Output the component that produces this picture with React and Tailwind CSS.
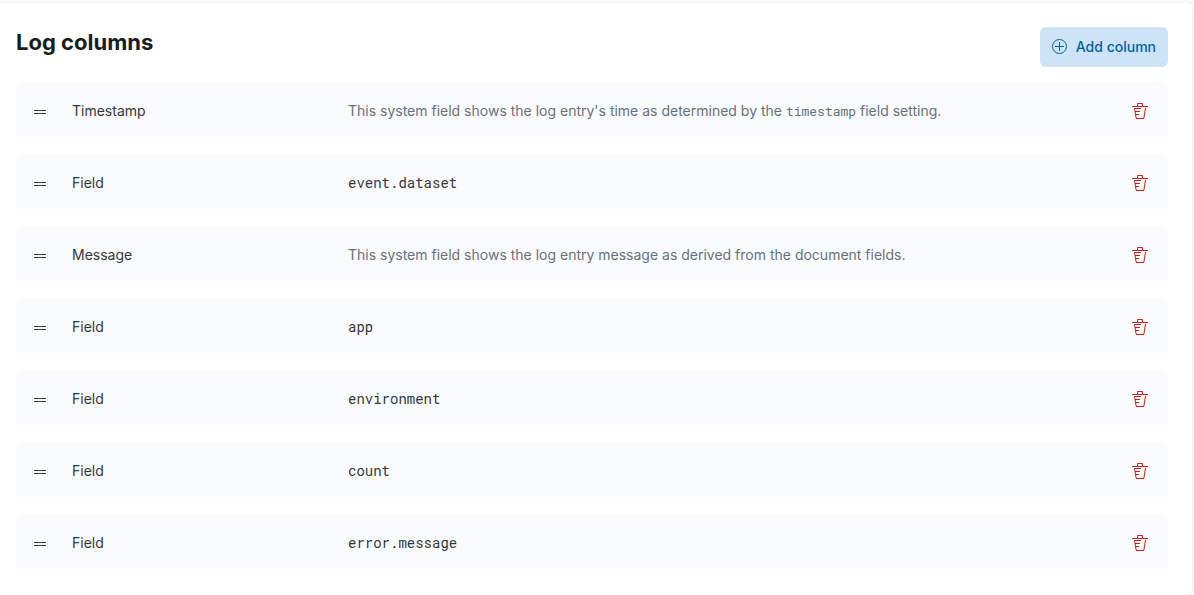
const COLUMNS = [
  {
    id: 'timestamp',
    type: 'Timestamp',
    description: (
      <>
        This system field shows the log entry's time as determined by the{' '}
        <code className="font-['Roboto_Mono','DejaVu_Sans_Mono',monospace] text-[13px]">timestamp</code> field setting.
      </>
    ),
  },
  { id: 'dataset', type: 'Field', field: 'event.dataset' },
  {
    id: 'message',
    type: 'Message',
    description: 'This system field shows the log entry message as derived from the document fields.',
  },
  { id: 'app', type: 'Field', field: 'app' },
  { id: 'environment', type: 'Field', field: 'environment' },
  { id: 'count', type: 'Field', field: 'count' },
  { id: 'error', type: 'Field', field: 'error.message' },
];

function GrabIcon() {
  return (
    <svg className="size-4" viewBox="0 0 16 16" fill="currentColor" aria-hidden="true">
      <rect x="2" y="7" width="12" height="1" />
      <rect x="2" y="10" width="12" height="1" />
    </svg>
  );
}

function PlusInCircleIcon() {
  return (
    <svg className="size-4" viewBox="0 0 16 16" fill="none" stroke="currentColor" aria-hidden="true">
      <circle cx="7.5" cy="7.5" r="7" />
      <path d="M7.5 3v9M3 7.5h9" />
    </svg>
  );
}

function TrashIcon() {
  return (
    <svg className="size-4" viewBox="0 0 16 16" fill="currentColor" aria-hidden="true">
      <path d="M11 3h5v1H0V3h5V1a1 1 0 0 1 1-1h4a1 1 0 0 1 1 1v2Zm-7.056 8H7v1H4.1l.392 2.519c.042.269.254.458.493.458h6.03c.239 0 .451-.189.493-.458l1.498-9.576H14l-1.504 9.73c-.116.747-.74 1.304-1.458 1.304h-6.03c-.718 0-1.342-.557-1.458-1.304L2 4.943 9 4.95v1H3.157L3.476 8H8v1H3.632l.312 2ZM6 3h4V1H6v2Z" />
    </svg>
  );
}

function ColumnRow({ column }) {
  return (
    <li className="flex h-14 items-center rounded-md bg-[#fafbfd] px-4">
      <button type="button" aria-label={`Reorder ${column.type} column`} className="cursor-grab text-[#343741]">
        <GrabIcon />
      </button>
      <div className="ml-6 w-[276px] shrink-0 text-[#343741]">{column.type}</div>
      {column.field ? (
        <code className="min-w-0 flex-1 font-['Roboto_Mono','DejaVu_Sans_Mono',monospace] text-sm text-[#343741]">
          {column.field}
        </code>
      ) : (
        <p className="min-w-0 flex-1 text-[#69707d]">{column.description}</p>
      )}
      <button type="button" aria-label={`Remove ${column.type} column`} className="mx-1 text-[#bd271e]">
        <TrashIcon />
      </button>
    </li>
  );
}

export default function App() {
  return (
    <div className="overflow-hidden bg-[#fafbfd] pt-[3px] pr-[2px] font-['Inter',sans-serif] text-sm">
      <section className="rounded-r-md bg-white pt-6 pr-6 pb-6 pl-4 shadow-[0_1px_4px_rgba(0,0,0,0.08)]">
        <header className="mb-4 flex items-start justify-between">
          <h2 className="text-[22px] leading-[30px] font-bold text-[#1a1c21]">Log columns</h2>
          <button
            type="button"
            className="flex h-10 items-center gap-2 rounded-md bg-[#cce4f5] px-3 font-medium text-[#0061a6]"
          >
            <PlusInCircleIcon />
            Add column
          </button>
        </header>
        <ul className="flex flex-col gap-4">
          {COLUMNS.map((column) => (
            <ColumnRow key={column.id} column={column} />
          ))}
        </ul>
      </section>
    </div>
  );
}
